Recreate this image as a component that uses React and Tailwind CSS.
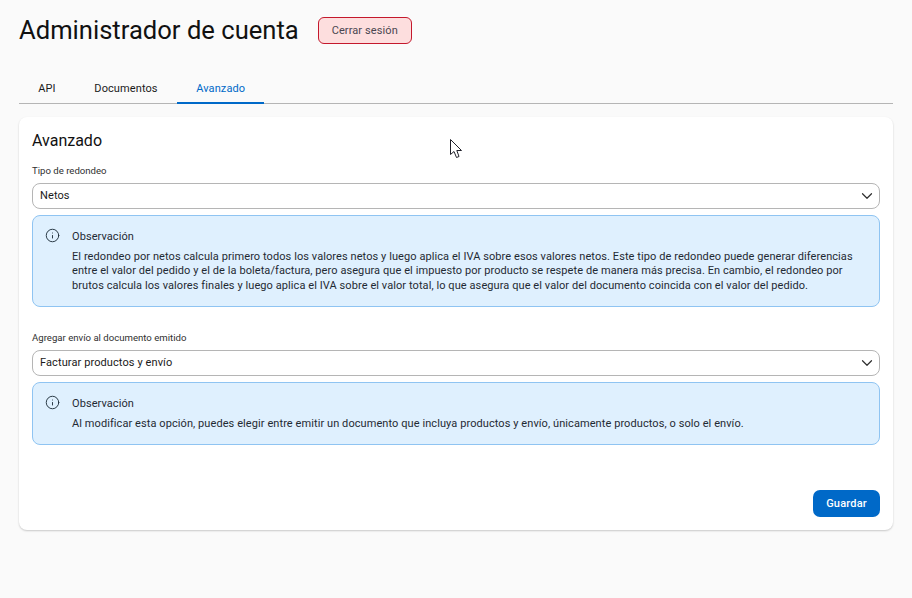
import React from "react";
import { ChevronDown, Info } from "lucide-react";

const tabs = ["API", "Documentos", "Avanzado"];

const SelectBox = ({ value }) => (
  <div className="flex h-[26px] items-center justify-between rounded-[8px] border border-[#b5b5b5] bg-white pl-[7px] pr-[3px]">
    <span className="text-[11px] tracking-[0.1px] text-[#1a1a1a]">{value}</span>
    <ChevronDown className="h-[18px] w-[18px] text-[#303030]" strokeWidth={1.6} />
  </div>
);

const Note = ({ children }) => (
  <div className="mt-[6px] flex gap-[12px] rounded-[8px] border border-[#8fc4f2] bg-[#dff0fe] pb-[13px] pl-[12px] pr-[10px] pt-[14px]">
    <Info className="-mt-[2px] h-[15px] w-[15px] shrink-0 text-[#20303c]" strokeWidth={1.5} />
    <div className="min-w-0">
      <p className="text-[11px] leading-[14px] tracking-[0.08px] text-[#1f2a33]">Observación</p>
      <p className="mt-[6px] text-[11px] leading-[14.33px] tracking-[0.08px] text-[#1f2a33]">{children}</p>
    </div>
  </div>
);

export default function App() {
  return (
    <div className="relative min-h-[598px] bg-[#fafafa] px-[19px] pt-[17px] font-['Roboto',sans-serif] text-[#111]">
      <div className="flex items-center gap-[19px]">
        <h1 className="text-[25.6px] leading-[27px]">Administrador de cuenta</h1>
        <button className="h-[27px] w-[94px] rounded-[6px] border border-[#c4182c] bg-[#fddede] pt-px text-[11px] tracking-[0.1px] text-[#4a4650]">
          Cerrar sesión
        </button>
      </div>

      <div className="mt-[28px] flex h-[32px] border-b border-[#b5b5b5]">
        {tabs.map((tab) => (
          <div
            key={tab}
            className={
              tab === "Avanzado"
                ? "-mb-px flex items-center border-b-2 border-[#0069c8] px-[19.3px] pt-[4px] text-[11px] tracking-[0.1px] text-[#0069c8]"
                : "flex items-center px-[19.3px] pt-[4px] text-[11px] tracking-[0.1px] text-[#1a1a1a]"
            }
          >
            {tab}
          </div>
        ))}
      </div>

      <div className="mt-[13px] h-[413px] rounded-[8px] bg-white px-[13px] pt-[14px] shadow-[0_1px_2px_rgba(0,0,0,0.2)]">
        <h2 className="text-[16px] leading-[20px]">Avanzado</h2>

        <label className="mt-[13px] block text-[9.6px] leading-[14px] text-[#303030]">Tipo de redondeo</label>
        <div className="mt-[5px]">
          <SelectBox value="Netos" />
        </div>
        <Note>
          El redondeo por netos calcula primero todos los valores netos y luego aplica el IVA sobre esos valores netos. Este tipo de redondeo puede generar diferencias entre el valor del pedido y el de la boleta/factura, pero asegura que el impuesto por producto se respete de manera más precisa. En cambio, el redondeo por brutos calcula los valores finales y luego aplica el IVA sobre el valor total, lo que asegura que el valor del documento coincida con el valor del pedido.
        </Note>

        <label className="mt-[24px] block text-[9.6px] leading-[14px] text-[#303030]">Agregar envío al documento emitido</label>
        <div className="mt-[5px]">
          <SelectBox value="Facturar productos y envío" />
        </div>
        <Note>
          Al modificar esta opción, puedes elegir entre emitir un documento que incluya productos y envío, únicamente productos, o solo el envío.
        </Note>

        <div className="mt-[45px] flex justify-end">
          <button className="h-[27px] w-[67px] rounded-[7px] bg-[#0069c8] text-[11px] font-medium tracking-[0.2px] text-white">
            Guardar
          </button>
        </div>
      </div>

      {/* mouse pointer captured in the shot */}
      <svg className="absolute left-[450px] top-[139px]" width="13" height="20" viewBox="0 0 13 20">
        <path d="M0.5 0.5V15.5L4 12.5L6.5 18.5L9 17.5L6.8 11.5H11.5Z" fill="#fff" stroke="#20202a" strokeWidth="1" />
      </svg>
    </div>
  );
}
